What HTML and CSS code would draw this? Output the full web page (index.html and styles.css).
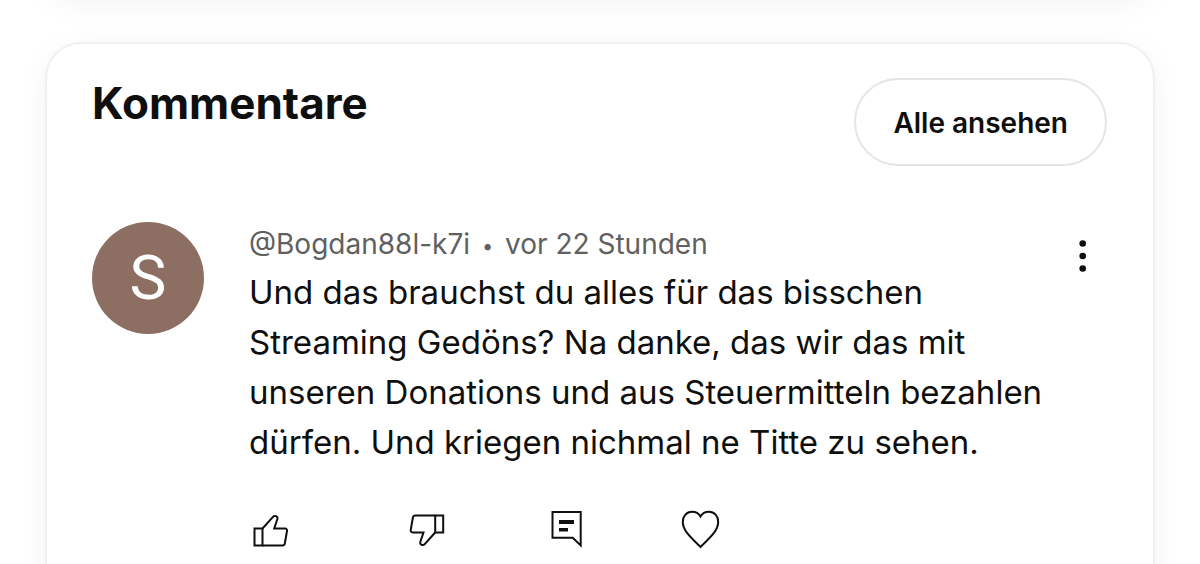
FILE: index.html
```html
<!DOCTYPE html>
<html lang="de">

<head>
    <meta charset="UTF-8">
    <meta name="viewport" content="width=device-width, initial-scale=1.0">
    <title>Kommentare</title>
    <link rel="stylesheet" href="styles.css">
</head>

<body>
    <main class="page">
        <div class="card card-previous"></div>

        <!-- Comments -->
        <section class="card comments">
            <header class="comments-header">
                <h2>Kommentare</h2>
                <button class="view-all" type="button">Alle ansehen</button>
            </header>

            <article class="comment">
                <div class="avatar">S</div>
                <div class="comment-body">
                    <p class="meta">@Bogdan88l-k7i <span class="dot">•</span> vor 22 Stunden</p>
                    <p class="text">Und das brauchst du alles für das bisschen Streaming Gedöns? Na danke, das wir das mit unseren Donations und aus Steuermitteln bezahlen dürfen. Und kriegen nichmal ne Titte zu sehen.</p>
                    <div class="actions">
                        <button class="icon-btn like" type="button" aria-label="Mag ich">
                            <svg viewBox="0 0 48 48">
                                <path d="M5.5 22.5H13.5V39.5H5.5Z" />
                                <path d="M13.5 22.5L24 10.8C25.5 9.2 29 9.8 28.4 13L25.2 22.5H36C37.5 22.5 38.3 23.7 38 25L35.8 37.5C35.5 38.9 34.6 39.5 33.5 39.5H13.5" />
                            </svg>
                        </button>
                        <button class="icon-btn" type="button" aria-label="Mag ich nicht">
                            <svg viewBox="0 0 48 48">
                                <path d="M34.2 9.5H42.2V26.5H34.2Z" />
                                <path d="M34.2 26.5L23.7 38.2C22.2 39.8 18.7 39.2 19.3 36L22.5 26.5H11.7C10.2 26.5 9.4 25.3 9.7 24L11.9 11.5C12.2 10.1 13.1 9.5 14.2 9.5H34.2" />
                            </svg>
                        </button>
                        <button class="icon-btn" type="button" aria-label="Antworten">
                            <svg viewBox="0 0 48 48">
                                <path d="M15.5 6H43.7V39.5L35.7 31.8H15.5Z" />
                                <path class="fill" d="M22 14H37V18H22ZM22 22H31V25.6H22Z" />
                            </svg>
                        </button>
                        <button class="icon-btn" type="button" aria-label="Herz">
                            <svg viewBox="0 0 48 48">
                                <path d="M27.5 10.5C25.7 7.4 22.6 5.8 19.1 5.8C13.6 5.8 9.8 10 9.8 16C9.8 24 16.3 30 27.5 41C38.7 30 45.2 24 45.2 16C45.2 10 41.4 5.8 35.9 5.8C32.4 5.8 29.3 7.4 27.5 10.5Z" />
                            </svg>
                        </button>
                    </div>
                </div>
                <button class="icon-btn menu" type="button" aria-label="Mehr">
                    <svg viewBox="0 0 48 48">
                        <circle class="fill" cx="23.7" cy="11.5" r="3.3" />
                        <circle class="fill" cx="23.7" cy="24" r="3.3" />
                        <circle class="fill" cx="23.7" cy="36.5" r="3.3" />
                    </svg>
                </button>
            </article>
        </section>
    </main>
</body>

</html>
```
FILE: styles.css
```css
* {
    box-sizing: border-box;
    margin: 0;
    padding: 0;
}

body {
    font-family: Inter, "Liberation Sans", sans-serif;
    background-color: #fff;
    color: #0f0f0f;
    overflow: hidden;
}

.page {
    padding: 0 45px;
}

.card {
    background-color: #fff;
    border: 2px solid #f0f0f0;
    border-radius: 36px;
    box-shadow: 0 8px 32px rgba(0, 0, 0, 0.05);
}

/* Only the shadow of the card above reaches into view */
.card-previous {
    height: 100px;
    margin-top: -104px;
    margin-bottom: 46px;
}

.comments {
    padding: 34px 46px 60px 45px;
}

.comments-header {
    display: flex;
    justify-content: space-between;
    align-items: flex-start;
    margin-bottom: 56px;
}

.comments-header h2 {
    font-size: 44px;
    font-weight: 700;
    line-height: 50px;
}

.view-all {
    height: 88px;
    padding: 2px 37px 0;
    border: 2px solid #e5e5e5;
    border-radius: 44px;
    background-color: #fff;
    color: #0f0f0f;
    font-family: inherit;
    font-size: 28px;
    font-weight: 600;
    cursor: pointer;
}

.comment {
    display: flex;
    align-items: flex-start;
}

.avatar {
    flex: none;
    width: 112px;
    height: 112px;
    margin-right: 45px;
    border-radius: 50%;
    background-color: #8d6e63;
    color: #fff;
    font-family: Roboto, sans-serif;
    font-size: 62px;
    line-height: 112px;
    text-align: center;
}

.comment-body {
    flex: 1;
}

.meta {
    color: #606060;
    font-size: 28px;
    line-height: 45px;
}

.dot {
    margin: 0 4px;
    font-size: 20px;
    line-height: 20px;
    vertical-align: middle;
}

.text {
    font-size: 33px;
    line-height: 50px;
}

.actions {
    display: flex;
    gap: 88px;
    margin-top: 39px;
}

.icon-btn {
    flex: none;
    width: 48px;
    height: 48px;
    border: none;
    background: none;
    cursor: pointer;
}

.icon-btn svg {
    display: block;
    width: 48px;
    height: 48px;
    fill: none;
    stroke: #0f0f0f;
    stroke-width: 2;
}

.icon-btn .fill {
    fill: #0f0f0f;
    stroke: none;
}

.like {
    margin-right: 16px;
}

.menu {
    margin-top: 10px;
}
```
